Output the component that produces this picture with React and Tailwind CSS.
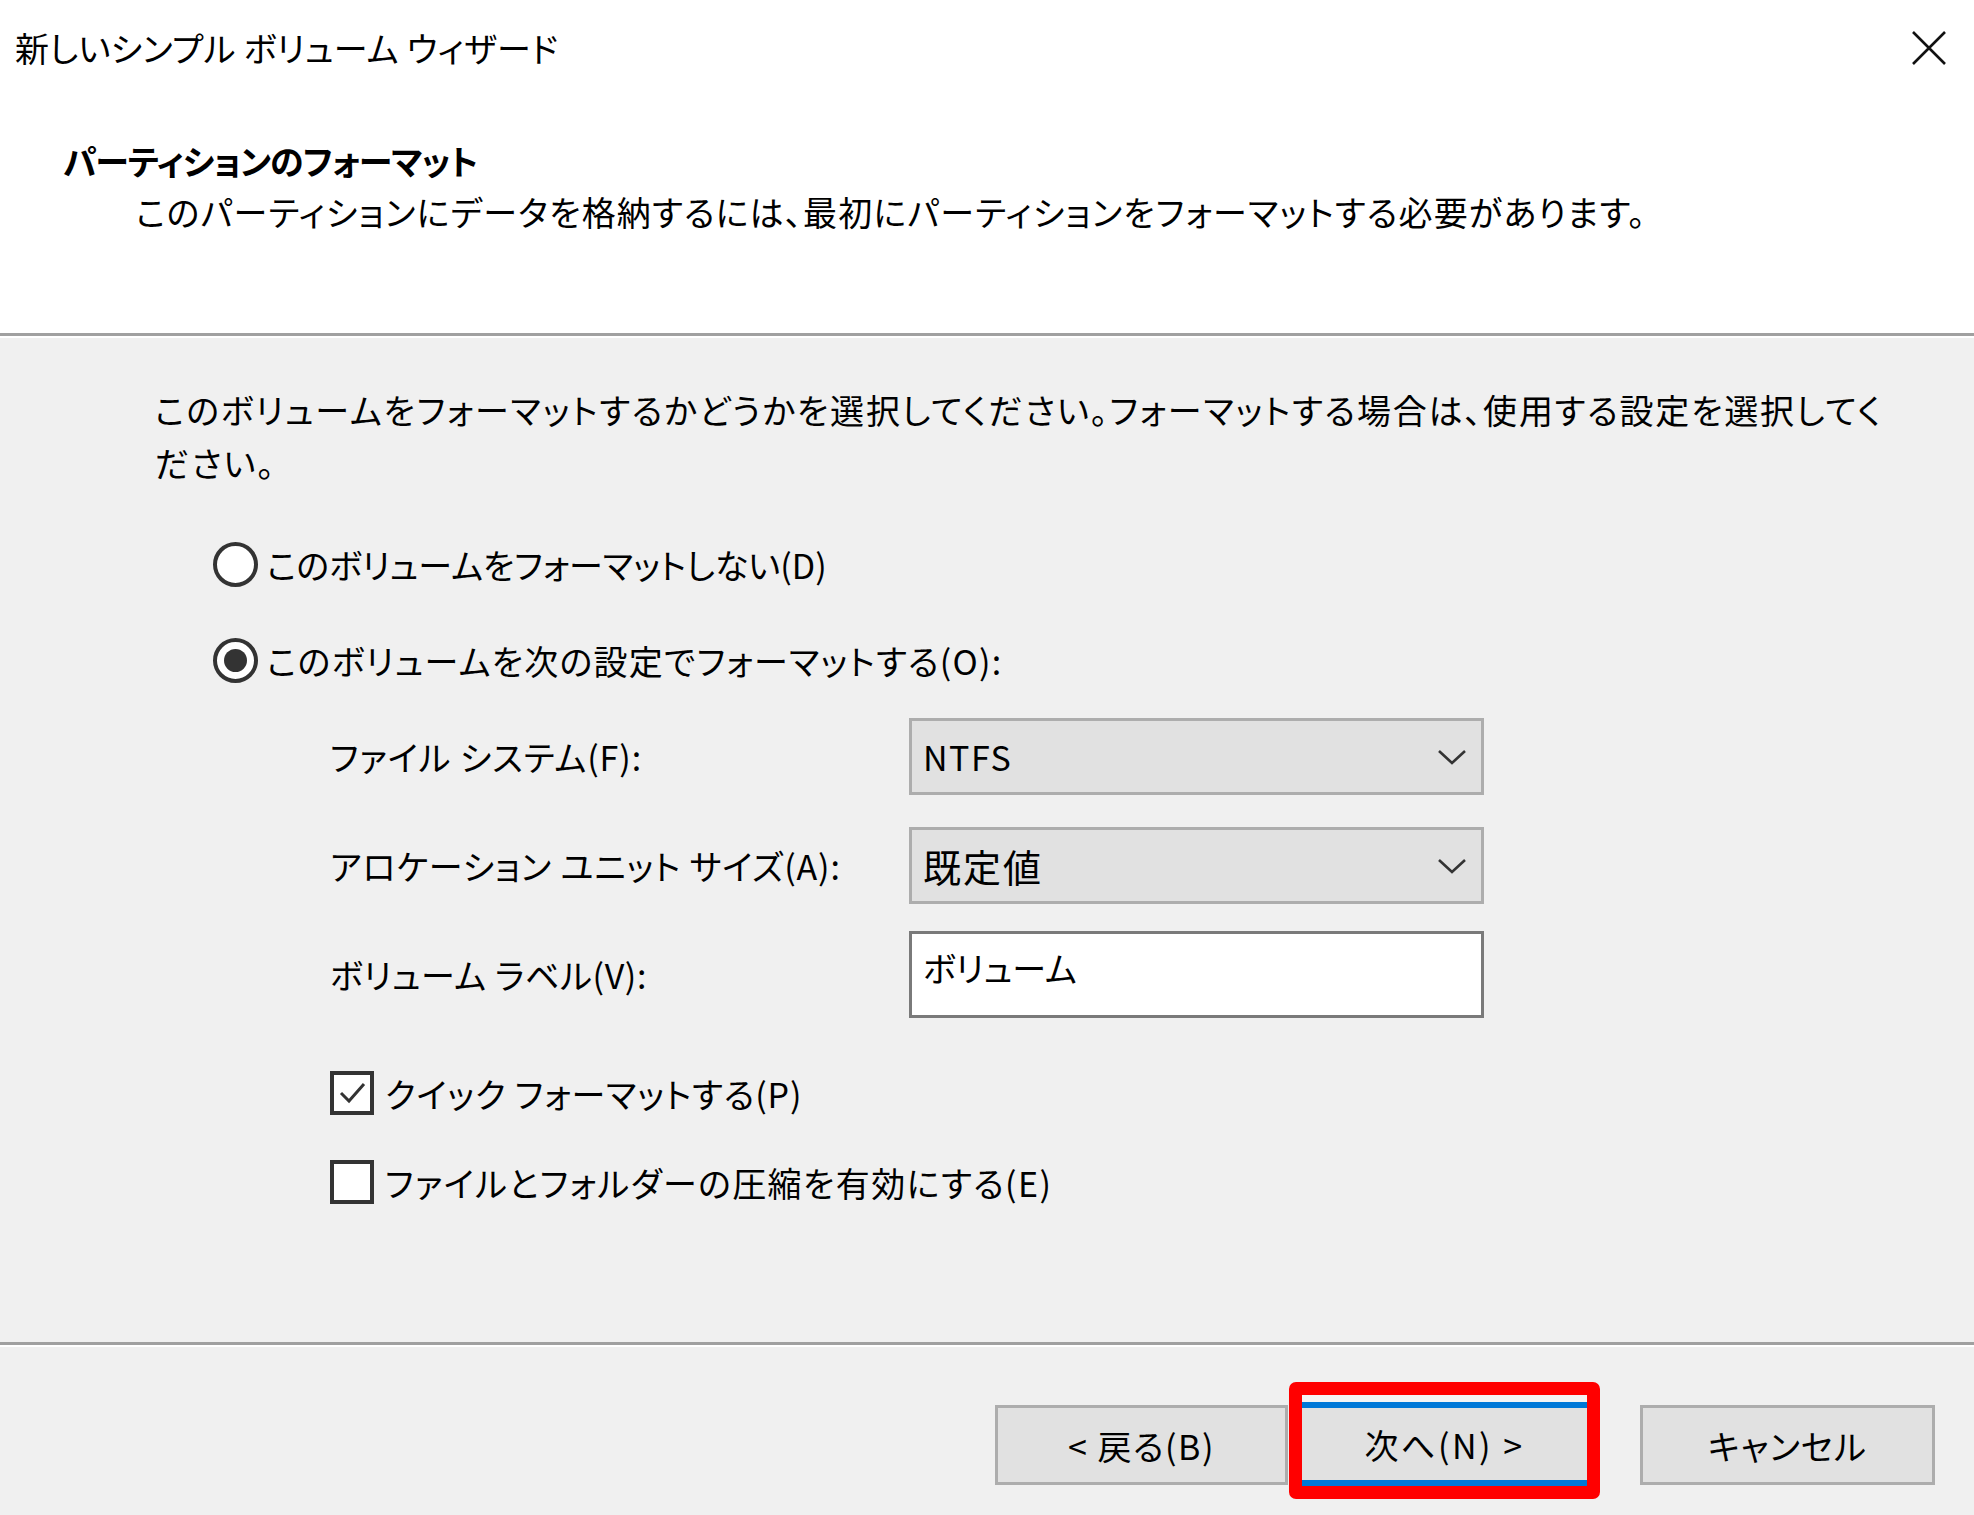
export default function App() {
  return (
    <div className="w-[1974px] h-[1515px] overflow-hidden bg-[#f0f0f0] text-black text-[34px] font-['Noto_Sans_CJK_JP','Noto_Sans_CJK_SC',sans-serif] [font-feature-settings:'palt']">
      {/* header */}
      <div className="h-[333px] bg-white flex flex-col">
        <div className="h-[96px] flex items-center justify-between pl-[15px] pr-[27px]">
          <span className="leading-none tracking-[0.3px]">新しいシンプル ボリューム ウィザード</span>
          <svg width="36" height="36" viewBox="0 0 36 36" fill="none" stroke="#111" strokeWidth="2.6">
            <path d="M2 2L34 34M34 2L2 34" />
          </svg>
        </div>
        <div className="mt-[39px] pl-[63px] font-bold leading-[51px] tracking-[-0.9px]">パーティションのフォーマット</div>
        <div className="pl-[136px] leading-[51px] tracking-[1.2px]">このパーティションにデータを格納するには、最初にパーティションをフォーマットする必要があります。</div>
      </div>
      <div className="h-[3px] bg-[#a0a0a0]" />
      <div className="h-[2px] bg-white" />

      {/* body */}
      <div className="pt-[45px] pl-[155px] leading-[53px] whitespace-nowrap tracking-[1.8px]">
        このボリュームをフォーマットするかどうかを選択してください。フォーマットする場合は、使用する設定を選択してく
        <br />
        ださい。
      </div>

      <div className="pl-[213px] flex flex-col">
        <label className="mt-[45px] h-[60px] flex items-center gap-[9px]">
          <span className="w-[45px] h-[45px] rounded-full border-[4px] border-[#333] bg-white" />
          <span>このボリュームをフォーマットしない(D)</span>
        </label>
        <label className="mt-[36px] h-[60px] flex items-center gap-[9px]">
          <span className="w-[45px] h-[45px] rounded-full border-[4px] border-[#333] bg-white flex items-center justify-center">
            <span className="w-[23px] h-[23px] rounded-full bg-[#333]" />
          </span>
          <span className="tracking-[1.25px]">このボリュームを次の設定でフォーマットする(O):</span>
        </label>
      </div>

      <div className="pl-[330px] flex flex-col">
        <div className="mt-[28px] h-[77px] flex items-center">
          <span className="w-[579px] tracking-[0.9px]">ファイル システム(F):</span>
          <Select value="NTFS" />
        </div>
        <div className="mt-[32px] h-[77px] flex items-center">
          <span className="w-[579px] tracking-[0.8px]">アロケーション ユニット サイズ(A):</span>
          <Select value="既定値" wide />
        </div>
        <div className="mt-[27px] h-[87px] flex items-center">
          <span className="w-[579px] tracking-[0.6px]">ボリューム ラベル(V):</span>
          <div className="w-[575px] h-full border-[3px] border-[#7a7a7a] bg-white pl-[11px] pt-[10px] leading-[48px]">ボリューム</div>
        </div>

        <label className="mt-[45px] h-[60px] flex items-center gap-[11px]">
          <span className="w-[44px] h-[44px] border-[4px] border-[#333] bg-white flex items-center justify-center">
            <svg width="30" height="30" viewBox="0 0 30 30" fill="none" stroke="#333" strokeWidth="3">
              <path d="M4 15L12 23L27 6" />
            </svg>
          </span>
          <span className="tracking-[0.9px]">クイック フォーマットする(P)</span>
        </label>
        <label className="mt-[29px] h-[60px] flex items-center gap-[11px]">
          <span className="w-[44px] h-[44px] border-[4px] border-[#333] bg-white" />
          <span className="tracking-[1.4px]">ファイルとフォルダーの圧縮を有効にする(E)</span>
        </label>
      </div>

      <div className="mt-[130px] h-[3px] bg-[#a0a0a0]" />
      <div className="h-[2px] bg-white" />

      {/* buttons */}
      <div className="mt-[35px] flex items-start justify-end pr-[39px]">
        <button className="mt-[23px] w-[293px] h-[80px] border-[3px] border-[#adadad] bg-[#e1e1e1] mr-px tracking-[1.5px]">&lt; 戻る(B)</button>
        <div className="w-[311px] h-[117px] border-[13px] border-[#ff0000] rounded-[7px] flex flex-col">
          <div className="h-[7px] bg-[#f4f4f4]" />
          <button className="flex-1 border-y-[6px] border-[#0078d7] bg-[#e1e1e1] tracking-[2.5px]">次へ(N) &gt;</button>
        </div>
        <button className="ml-[40px] mt-[23px] w-[295px] h-[80px] border-[3px] border-[#adadad] bg-[#e1e1e1] tracking-[1px]">キャンセル</button>
      </div>
    </div>
  );
}

function Select({ value, wide }) {
  return (
    <div className="w-[575px] h-full border-[3px] border-[#adadad] bg-[#e1e1e1] flex items-center justify-between pl-[11px] pr-[14px]">
      <span className={wide ? 'text-[38px] tracking-[2px]' : 'tracking-[1.5px]'}>{value}</span>
      <svg width="30" height="16" viewBox="0 0 30 16" fill="none" stroke="#333" strokeWidth="2.6">
        <path d="M2 2L15 14L28 2" />
      </svg>
    </div>
  );
}
